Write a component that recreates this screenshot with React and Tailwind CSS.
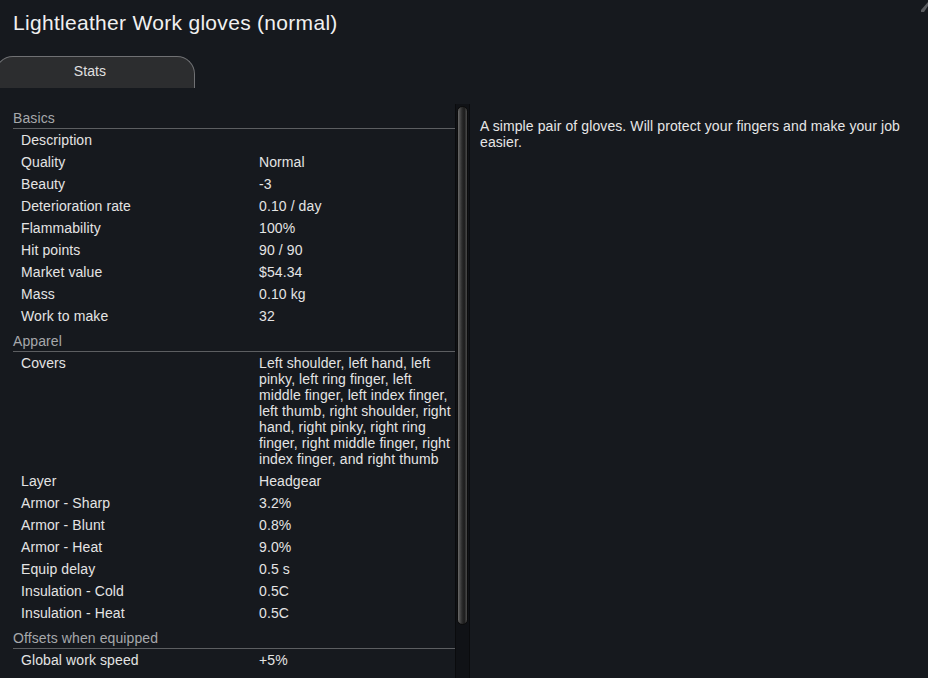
import React from 'react';

// stat card data
const sections = [
  {
    title: 'Basics',
    rows: [
      ['Description', ''],
      ['Quality', 'Normal'],
      ['Beauty', '-3'],
      ['Deterioration rate', '0.10 / day'],
      ['Flammability', '100%'],
      ['Hit points', '90 / 90'],
      ['Market value', '$54.34'],
      ['Mass', '0.10 kg'],
      ['Work to make', '32'],
    ],
  },
  {
    title: 'Apparel',
    rows: [
      ['Covers', 'Left shoulder, left hand, left pinky, left ring finger, left middle finger, left index finger, left thumb, right shoulder, right hand, right pinky, right ring finger, right middle finger, right index finger, and right thumb'],
      ['Layer', 'Headgear'],
      ['Armor - Sharp', '3.2%'],
      ['Armor - Blunt', '0.8%'],
      ['Armor - Heat', '9.0%'],
      ['Equip delay', '0.5 s'],
      ['Insulation - Cold', '0.5C'],
      ['Insulation - Heat', '0.5C'],
    ],
  },
  {
    title: 'Offsets when equipped',
    rows: [['Global work speed', '+5%']],
  },
];

const Section = ({ title, rows }) => (
  <div>
    <div className="h-[25px] pt-[6px] leading-[17px] text-[#a6a8ab] border-b border-[#5c5e61]">{title}</div>
    {rows.map(([label, value]) => (
      <div key={label} className="flex py-[3px] leading-[16px] text-[#e4e4e4]">
        <div className="w-[246px] shrink-0 pl-2">{label}</div>
        <div className="w-[197px] shrink-0">{value}</div>
      </div>
    ))}
  </div>
);

export default function App() {
  return (
    <div
      className="relative w-[928px] h-[678px] overflow-hidden bg-[#16191e] text-[14px] tracking-[0.1px] flex flex-col"
      style={{ fontFamily: '"Liberation Sans", Arial, sans-serif' }}
    >
      <svg className="absolute right-0 top-0" width="7" height="14" viewBox="0 0 7 14">
        <polygon points="7,2 7,6 3,12 0,12 0,10" fill="#5b5d61" />
      </svg>

      <div className="h-[56px] pl-[13px] pt-[11px] text-[21px] tracking-[0.3px] leading-[24px] text-[#f0f0f0]">
        Lightleather Work gloves (normal)
      </div>

      <div className="flex">
        <div className="-ml-[5px] h-[32px] w-[200px] rounded-t-[18px] border-t border-l border-r border-[#707174] bg-[#2c2d2f] flex items-center justify-center pr-[10px] pb-[2px] text-[#e0e0e0]">
          Stats
        </div>
      </div>

      <div className="flex flex-1 mt-[16px] min-h-0">
        <div className="w-[442px] ml-[13px] shrink-0">
          {sections.map((s) => (
            <Section key={s.title} title={s.title} rows={s.rows} />
          ))}
        </div>

        <div className="w-[15px] shrink-0 bg-[#101216] border-l border-r border-[#0a0b0d] pt-[2px]">
          <div
            className="mx-auto w-[11px] h-[519px] rounded-full border border-[#0c0c0c]"
            style={{ background: 'linear-gradient(to right, #6b6b6b 0%, #4a4a4a 20%, #2b2b2b 45%, #1c1c1c 70%, #4e4e4e 100%)' }}
          />
        </div>

        <div className="flex-1 pl-[10px] pr-[20px] pt-[14px] leading-[16px] text-[#e6e6e6]">
          A simple pair of gloves. Will protect your fingers and make your job easier.
        </div>
      </div>
    </div>
  );
}
